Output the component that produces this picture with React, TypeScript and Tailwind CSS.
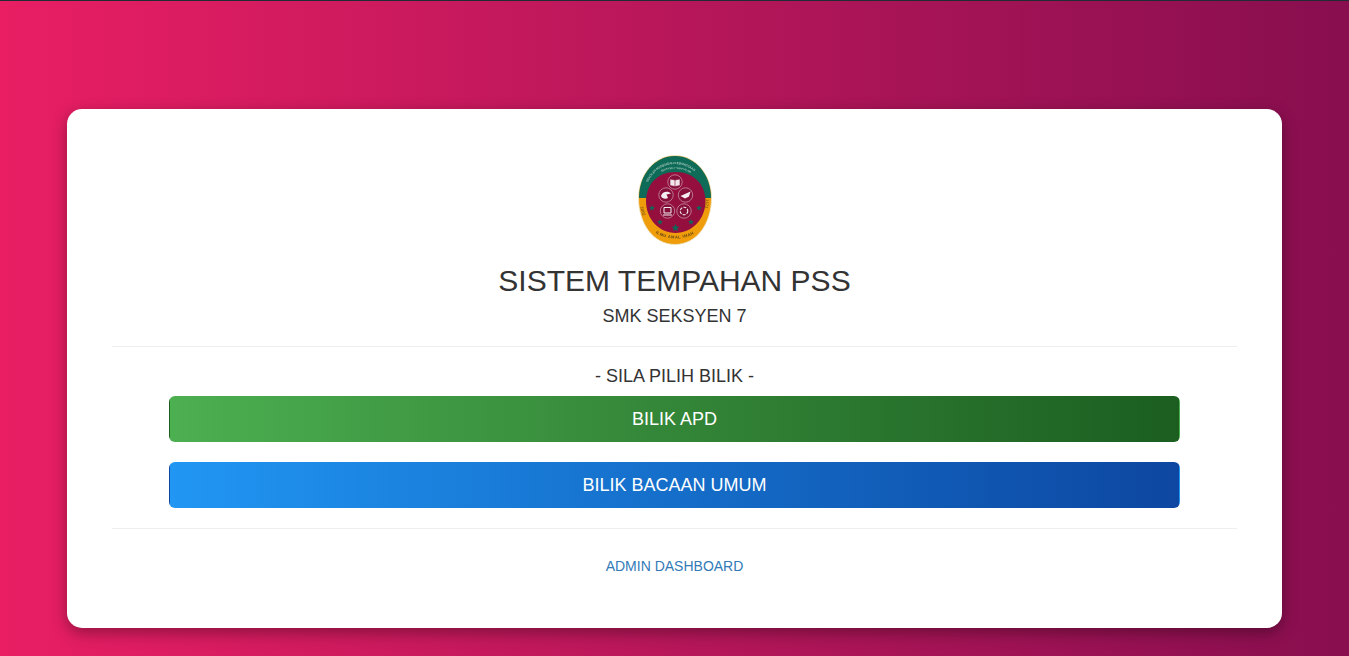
const font = "Liberation Sans, sans-serif";

function Star({ x, y, r }: { x: number; y: number; r: number }) {
  const pts = Array.from({ length: 10 }, (_, i) => {
    const a = -Math.PI / 2 + (i * Math.PI) / 5;
    const d = i % 2 === 0 ? r : r * 0.45;
    return `${(x + d * Math.cos(a)).toFixed(2)},${(y + d * Math.sin(a)).toFixed(2)}`;
  }).join(" ");
  return <polygon points={pts} fill="#0c6a58" />;
}

function Logo() {
  return (
    <svg width="76" height="92" viewBox="0 0 76 92" className="blur-[0.45px]">
      <defs>
        <path id="arcOne" d="M9 32 C15 17 26 10 38 10 C50 10 61 17 67 32" />
        <path id="arcTwo" d="M20 21 C26 16 32 15 38 15 C44 15 50 16 56 21" />
        <path id="arcBottom" d="M13 74 C24 88 53 88 64 74" />
        <path id="arcLeft" d="M8.5 61 C6.5 56 5.5 51 5.5 45" />
        <path id="arcRight" d="M69 45 C69 51 68 56 66.5 61" />
      </defs>
      <path d="M38 1.5 C58 1.5 74.5 20 74.5 44 C74.5 69 60 90.5 38 90.5 C16 90.5 1.5 69 1.5 44 C1.5 20 18 1.5 38 1.5 Z" fill="#f09d0c" stroke="#ece6c8" strokeWidth="0.8" />
      <path d="M38 2 C58 2 74 20 74 44 L67 44 L10 44 L2 44 C2 20 18 2 38 2 Z" fill="#0d6b58" />
      <path d="M38.5 18 C57 18 68.5 31 68.5 47 C68.5 65 55 79 38.5 79 C22 79 9 65 9 47 C9 31 20 18 38.5 18 Z" fill="#940f3e" />
      <text fontSize="3.1" fill="#cfe2d8" fontFamily={font}>
        <textPath href="#arcOne" startOffset="5%">SEKOLAH MENENGAH KEBANGSAAN</textPath>
      </text>
      <text fontSize="2.6" fill="#cfe2d8" fontFamily={font}>
        <textPath href="#arcTwo" startOffset="14%">SEKSYEN 7 SHAH ALAM</textPath>
      </text>
      <text fontSize="4" fill="#5c4216" fontWeight="700" fontFamily={font} letterSpacing="0.5">
        <textPath href="#arcBottom" startOffset="13%">ILMU AMAL IMAN</textPath>
      </text>
      <text fontSize="4" fill="#5c4216" fontFamily={font}>
        <textPath href="#arcLeft">2002</textPath>
      </text>
      <text fontSize="4" fill="#5c4216" fontFamily={font}>
        <textPath href="#arcRight">1423</textPath>
      </text>
      {[[38, 28], [29, 41], [48.5, 41], [30.5, 57], [47, 57]].map(([x, y]) => (
        <circle key={`${x}-${y}`} cx={x} cy={y} r="7.2" fill="#85103a" stroke="#c98fa3" strokeWidth="0.8" />
      ))}
      <path d="M33 25 L38 26 L43 25 V31.5 L38 32.5 L33 31.5 Z M38 26 V32.5" fill="#f3e6ea" stroke="#85103a" strokeWidth="0.6" />
      <path d="M24 42 C25 37.5 31 36.5 34 39.5 L29.5 40.5 L31 44 C28 45.5 25 44.5 24 42 Z" fill="#f5eef0" />
      <path d="M43.5 42 L53.5 37.5 L52 42.5 L48 44.5 Z" fill="#f5eef0" />
      <path d="M27 53.5 H34 V59 H27 Z" fill="none" stroke="#f5eef0" strokeWidth="1" />
      <path d="M26 61 H35" stroke="#f5eef0" strokeWidth="1" />
      <circle cx="47" cy="57" r="3.8" fill="none" stroke="#f5eef0" strokeWidth="1.1" strokeDasharray="3 1.2" />
      <Star x={15} y={54} r={3} />
      <Star x={62} y={54} r={3} />
      <Star x={23} y={68} r={3} />
      <Star x={54} y={68} r={3} />
      <Star x={38.5} y={74} r={4} />
    </svg>
  );
}

export default function App() {
  return (
    <div className="min-h-[656px] border-t border-t-[#212b33] bg-gradient-to-r from-[#e91e63] to-[#880e4f] px-[67px] pt-[108px] font-['Liberation_Sans',Arial,sans-serif] text-[#333]">
      <div className="flex h-[519px] flex-col items-stretch rounded-[15px] bg-white px-[45px] pt-[45px] shadow-[0_5px_15px_rgba(0,0,0,0.35)]">
        <div className="flex justify-center">
          <Logo />
        </div>
        <h1 className="mt-[18px] text-center text-[30px] leading-[34px] font-normal">SISTEM TEMPAHAN PSS</h1>
        <h2 className="mt-[8px] text-center text-[18px] leading-[20px] font-normal">SMK SEKSYEN 7</h2>
        <hr className="mt-[20px] border-t border-[#eee]" />
        <p className="mt-[19px] text-center text-[18px] leading-[20px]">- SILA PILIH BILIK -</p>
        <div className="mt-[10px] flex flex-col gap-5 px-[57px]">
          <button className="h-[46px] rounded-[6px] border border-transparent bg-gradient-to-r from-[#4caf50] to-[#1b5e20] text-[18px] text-white">BILIK APD</button>
          <button className="h-[46px] rounded-[6px] border border-transparent bg-gradient-to-r from-[#2196f3] to-[#0d47a1] text-[18px] text-white">BILIK BACAAN UMUM</button>
        </div>
        <hr className="mt-[20px] border-t border-[#eee]" />
        <a href="#" className="mt-[29px] text-center text-[14px] leading-[16px] text-[#337ab7]">ADMIN DASHBOARD</a>
      </div>
    </div>
  );
}
